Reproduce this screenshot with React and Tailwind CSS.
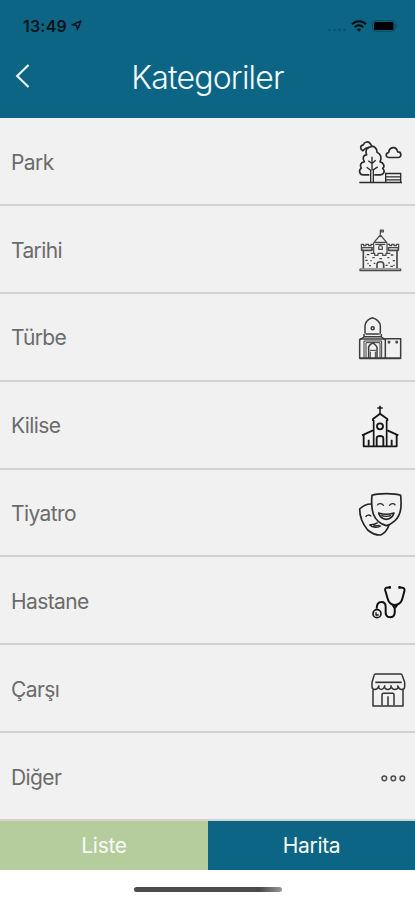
import React, { useState } from 'react'

// Line icons, drawn on a 210 x 180 grid with the row's right edge at 210
const ParkIcon = () => (
    <g strokeWidth="5">
        <path d="M54 61 C45 57 44 45 55 43 C57 34 71 30 76 40 L81 47" />
        <path d="M52 62 L63 53 L72 52" />
        <path d="M73 133 H55 C43 133 40 119 49 113 C43 104 48 94 58 94 C51 84 55 73 65 73 C59 61 66 49 77 49 C86 45 97 53 96 65 C106 69 112 81 105 94 C115 96 121 107 113 114 C122 122 116 133 106 133 H88" />
        <path d="M77 155 V119 L65 110 M85 155 V118 L98 109 M81 119 V79 M81 99 L70 91 M81 99 L92 89" strokeWidth="4" />
        <path d="M132 81 C122 81 120 68 131 66 C133 49 154 45 158 64 C170 63 171 81 160 81 Z" />
        <path d="M43 156 H171" />
        <path d="M122 127 V155 M167 127 V155 M120 129 H169 M120 139 H169 M120 148 H169" strokeWidth="4" />
    </g>
)

const CastleIcon = () => (
    <g strokeWidth="3.6" stroke="#4a4a4a">
        <path d="M106 57 V43 H115 V49 H107" />
        <path d="M108 46 H113" strokeWidth="5" />
        <path d="M87 80 L106 58 L125 80 Z" />
        <path d="M86 81 V113 M126 81 V113 M91 86 H121 M101 101 V95 C101 88 112 88 112 95 V101 Z" />
        <path d="M84 96 H49 V86 H56 V90 H63 V86 H71 V90 H78 V86 H84" />
        <path d="M128 96 H161 V86 H154 V90 H147 V86 H140 V90 H134 V86 H128" />
        <path d="M50 97 V104 H81 V97 M130 97 V104 H160 V97 M55 105 V158 M156 105 V158" strokeWidth="5" />
        <path d="M77 113 H89 V119 H99 V113 H113 V119 H123 V113 H136" />
        <path d="M96 157 V145 C97 136 115 136 116 145 V157" strokeWidth="5" />
        <path d="M45 160 H167 V165 H45 Z" />
        <path d="M65 117 h8 M61 134 h7 M72 150 h6 M82 126 h7 M86 143 h5 M103 129 h8 M127 126 h6 M137 118 h8 M143 135 h7 M122 149 h6 M136 152 h8 M69 142 v4 M78 133 v4 M132 139 v5 M147 147 v4 M62 123 v3" strokeWidth="4" />
    </g>
)

const TombIcon = () => (
    <g strokeWidth="4.5" stroke="#3d3d3d">
        <path d="M60 84 V61 C61 46 73 39 82 36 C93 39 106 48 106 61 V84" />
        <path d="M62 85 H104 M57 93 H109 M57 85 V94 L45 102 M109 85 V94 L121 102" />
        <circle cx="83" cy="68" r="4.5" />
        <path d="M44 100 H122 M44 100 V158 H167 V99 H121 V158" />
        <path d="M57 157 V106 H110 V157 M63 157 V111 H105 V157" strokeWidth="3" />
        <path d="M71 157 V130 C68 120 76 118 83 111 C91 118 99 121 96 130 V157" />
        <path d="M75 134 H93 M76 138 V157 M91 138 V157" strokeWidth="3" />
        <path d="M130 105 V112 M134 105 V112 M153 105 V112 M157 105 V112 M129 112 H135 M152 112 H158" strokeWidth="3.5" />
        <path d="M44 158 H167" strokeWidth="5.5" />
    </g>
)

const ChurchIcon = () => (
    <g strokeWidth="5.5" stroke="#151515">
        <path d="M105 30 V56 M97 37 H113" strokeWidth="4.5" />
        <path d="M84 76 V70 L105 54 L127 70 V76" />
        <path d="M86 73 V151 M125 73 V151" strokeWidth="5" />
        <circle cx="105" cy="92" r="9" />
        <path d="M84 104 L51 119 M127 104 L160 119" />
        <path d="M56 118 V152 H155 V118" />
        <path d="M95 151 V127 C96 119 114 119 115 127 V151" />
        <path d="M71 150 V132 M140 150 V132" />
    </g>
)

const TheaterIcon = () => (
    <g strokeWidth="5" stroke="#242424">
        <path d="M81 43 C96 36 151 36 167 43 C170 75 169 101 150 119 C139 128 131 133 124 134 C104 128 91 116 85 99 C79 80 79 62 81 43 Z" />
        <path d="M78 69 C65 69 53 75 44 84 C44 109 54 130 68 147 C79 156 93 163 107 162 C118 157 127 147 132 132" />
        <path d="M97 73 C99 66 113 66 116 74 M133 74 C136 66 149 66 151 73" strokeWidth="4" />
        <path d="M101 96 C116 101 131 101 147 96 C144 106 137 114 124 115 C112 114 104 107 101 96 Z" />
        <path d="M109 103 C117 107 131 107 138 103" strokeWidth="4" />
        <path d="M62 108 C64 100 75 101 79 106" strokeWidth="4" />
        <path d="M73 131 C84 132 92 129 98 125 M73 131 C83 140 98 142 108 134 M85 135 L104 133" strokeWidth="4" />
    </g>
)

const StethoscopeIcon = () => (
    <g strokeWidth="6" stroke="#111">
        <path d="M138 55 L124 56 C120 58 119 63 122 68 L128 89 C131 100 138 107 149 108 C161 107 169 100 172 89 L178 67 C180 61 178 57 172 56 L160 55" />
        <path d="M134 51 V59 M164 51 V59" strokeWidth="5" />
        <path d="M143 108 L149 118 L157 107 M149 117 C150 128 151 145 136 145 C124 145 121 137 122 126 V113 C122 102 117 99 109 99 C99 99 95 106 95 119" />
        <circle cx="96" cy="134" r="12" strokeWidth="5" />
        <path d="M93 130 V138 H101" strokeWidth="4" />
    </g>
)

const ShopIcon = () => (
    <g strokeWidth="4.5" stroke="#333">
        <path d="M91 54 H167 Q171 54 172 59 L179 79 V93 C178 103 163 103 160 93 C156 103 143 103 139 93 C135 103 122 103 118 93 C114 103 104 103 100 93 C96 103 82 103 81 93 V79 L87 59 Q88 54 92 54 Z" />
        <path d="M91 79 H170" strokeWidth="5" />
        <path d="M100 93 L103 88 M118 93 L120 88 M139 93 L137 88 M160 93 L157 88" />
        <path d="M84 101 V150 H174 V101" />
        <path d="M111 148 V117 Q111 112 116 112 H143 Q147 112 147 117 V148 M129 121 V149" />
    </g>
)

const MoreIcon = () => (
    <g strokeWidth="4.5" stroke="#4d4d4d">
        <circle cx="118" cy="111" r="7" />
        <circle cx="145" cy="111" r="7" />
        <circle cx="172" cy="111" r="7" />
    </g>
)

const categories = [
    { name: 'Park', Icon: ParkIcon, viewBox: '0 4.5 210 180' },
    { name: 'Tarihi', Icon: CastleIcon, viewBox: '0 13 210 180' },
    { name: 'Türbe', Icon: TombIcon, viewBox: '0 7 210 180' },
    { name: 'Kilise', Icon: ChurchIcon, viewBox: '0 1 210 180' },
    { name: 'Tiyatro', Icon: TheaterIcon, viewBox: '0 9 210 180' },
    { name: 'Hastane', Icon: StethoscopeIcon, viewBox: '0 9 210 180' },
    { name: 'Çarşı', Icon: ShopIcon, viewBox: '0 12 210 180' },
    { name: 'Diğer', Icon: MoreIcon, viewBox: '0 20 210 180' },
]

const StatusBar = () => (
    <div className="flex h-[51px] items-center justify-between pl-[23px] pr-[17px] text-[#07151b]">
        <div className="flex items-center gap-1">
            <span className="text-[16px] font-semibold leading-none tracking-[0.2px]">13:49</span>
            <svg className="h-[11px] w-[11px]" viewBox="0 0 11 11" fill="none" stroke="currentColor" strokeWidth="1.4" strokeLinejoin="round">
                <path d="M1 4.8 L10 1 L6.4 9.8 L5.6 5.5 Z" />
            </svg>
        </div>
        <div className="flex items-center">
            <svg className="mr-1 h-[14px] w-[20px]" viewBox="0 0 20 14" fill="#0a4f68">
                <circle cx="2.5" cy="11" r="1.2" />
                <circle cx="7.5" cy="11" r="1.2" />
                <circle cx="12.5" cy="11" r="1.2" />
                <circle cx="17.5" cy="11" r="1.2" />
            </svg>
            <svg className="mr-[5px] h-[12px] w-[16px]" viewBox="0 0 16 12" fill="none" stroke="#020a0d" strokeWidth="2">
                <path d="M1 4.3 C5 0.2 11 0.2 15 4.3 M3.8 7.2 C6.2 4.7 9.8 4.7 12.2 7.2" />
                <path d="M8 11.6 L5.8 9.4 C7 8.3 9 8.3 10.2 9.4 Z" fill="#020a0d" stroke="none" />
            </svg>
            <svg className="h-[12px] w-[26px]" viewBox="0 0 26 12">
                <rect x="0.5" y="0.7" width="22.5" height="10.6" rx="3" fill="none" stroke="#09495f" />
                <rect x="2" y="2.1" width="19.5" height="7.8" rx="1.5" fill="#000" />
                <path d="M24.3 4 C26 4.6 26 7.4 24.3 8 Z" fill="#09495f" />
            </svg>
        </div>
    </div>
)

const App = () => {
    const [tab, setTab] = useState('Liste')

    return (
        <div className="flex h-[900px] w-[415px] flex-col overflow-hidden bg-white font-['Inter',sans-serif]">
            <header className="h-[118px] shrink-0 bg-[#0c6584]">
                <StatusBar />
                <div className="grid h-[50px] grid-cols-[60px_1fr_60px] items-center">
                    <button className="pl-[15px]" aria-label="Geri">
                        <svg className="h-[26px] w-[16px]" viewBox="0 0 16 26" fill="none" stroke="#e9f6fa" strokeWidth="2.2">
                            <path d="M13.5 2 L2.2 13 L13.5 24" />
                        </svg>
                    </button>
                    <h1 className="pt-[3px] text-center text-[32px] font-light leading-none tracking-[-0.8px] text-[#f1fbff]">Kategoriler</h1>
                </div>
            </header>

            <ul className="flex h-[703px] shrink-0 flex-col bg-[#f1f1f1]">
                {categories.map(({ name, Icon, viewBox }) => (
                    <li key={name} className="flex flex-1 items-center justify-between border-b-2 border-[#d2d2d2] pl-[11px] pt-[3px]">
                        <span className="text-[21px] font-normal tracking-[-0.6px] text-[#6b6b6b]">{name}</span>
                        <svg className="h-[60px] w-[70px]" viewBox={viewBox} fill="none" stroke="#2b2b2b" strokeLinejoin="round">
                            <Icon />
                        </svg>
                    </li>
                ))}
            </ul>

            <div className="flex h-[49px] shrink-0 text-[21px] tracking-[-0.3px] text-[#f6fcf3]">
                <button className="w-[208px] bg-[#b5cd9d]" onClick={() => setTab('Liste')} aria-pressed={tab === 'Liste'}>Liste</button>
                <button className="flex-1 bg-[#0c6584]" onClick={() => setTab('Harita')} aria-pressed={tab === 'Harita'}>Harita</button>
            </div>

            <div className="flex flex-1 justify-center pt-[17px]">
                <div className="h-[5px] w-[148px] rounded-full bg-linear-to-r from-[#4b4b4b] from-85% to-[#999]" />
            </div>
        </div>
    )
}

export default App
